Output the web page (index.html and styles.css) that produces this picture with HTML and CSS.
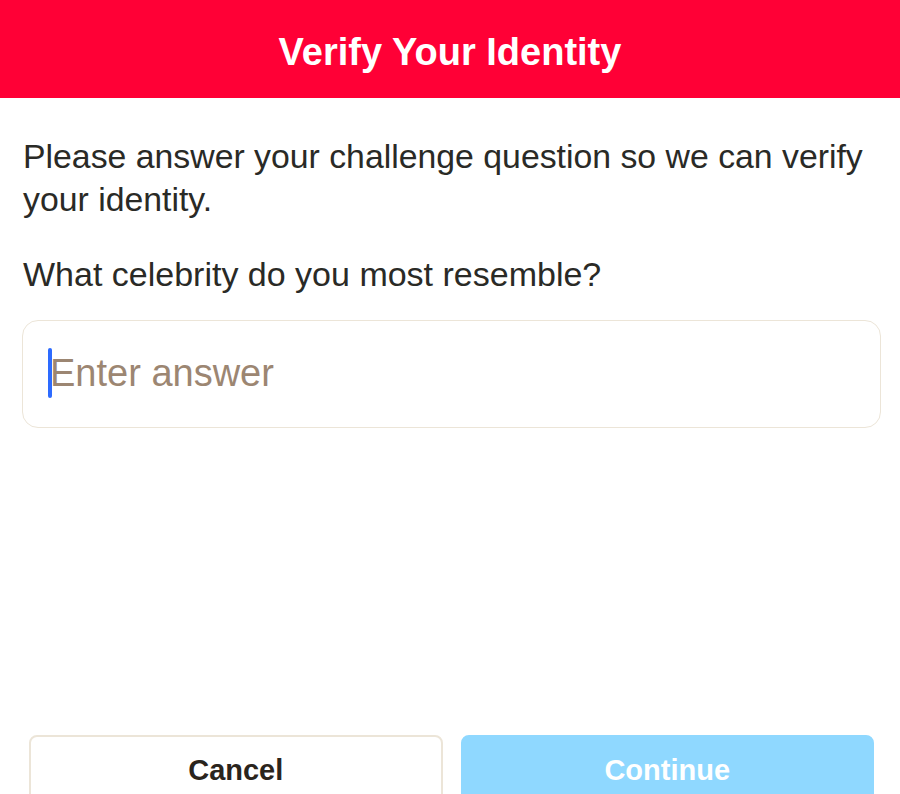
FILE: index.html
```html
<!DOCTYPE html>
<html lang="en">
<head>
  <meta charset="UTF-8">
  <title>Verify Your Identity</title>
  <link rel="stylesheet" href="styles.css">
</head>
<body>
  <header class="topbar">
    <h1>Verify Your Identity</h1>
  </header>

  <main class="content">
    <p class="intro">Please answer your challenge question so we can verify your identity.</p>
    <p class="question">What celebrity do you most resemble?</p>
    <div class="answer-box">
      <span class="caret"></span>
      <span class="placeholder">Enter answer</span>
    </div>
  </main>

  <div class="actions">
    <button class="btn cancel">Cancel</button>
    <button class="btn continue">Continue</button>
  </div>
</body>
</html>
```

FILE: styles.css
```css
body {
  margin: 0;
  font-family: "Liberation Sans", Arial, sans-serif;
  color: #2a2a26;
  background: #fff;
  height: 794px;
  overflow: hidden;
  display: flex;
  flex-direction: column;
}
.topbar {
  background: #ff0036;
  height: 98px;
  box-sizing: border-box;
  padding-top: 6px;
  display: flex;
  align-items: center;
  justify-content: center;
}
.topbar h1 {
  margin: 0;
  color: #fff;
  font-size: 38px;
  font-weight: bold;
}
.content {
  padding: 0 19px 0 22px;
  flex: 1;
}
.intro {
  margin: 37px 0 0 1px;
  font-size: 33.8px;
  line-height: 43px;
}
.question {
  margin: 32px 0 0 1px;
  font-size: 34px;
  line-height: 43px;
}
.answer-box {
  margin-top: 24px;
  height: 108px;
  box-sizing: border-box;
  border: 1px solid #ece5d8;
  border-radius: 16px;
  display: flex;
  align-items: center;
  padding-left: 25px;
  padding-bottom: 2px;
}
.caret {
  width: 4px;
  height: 50px;
  border-radius: 2px;
  background: #2d6bff;
}
.placeholder {
  font-size: 38px;
  color: #9c8672;
  margin-left: -2px;
}
.actions {
  display: flex;
  gap: 18px;
  padding: 0 26px 0 29px;
  height: 59px;
  align-items: flex-start;
}
.btn {
  flex: 1;
  height: 90px;
  border-radius: 8px;
  font-family: "Liberation Sans", Arial, sans-serif;
  font-size: 29px;
  font-weight: bold;
  padding: 0 0 20px;
}
.cancel {
  background: #fff;
  border: 2px solid #ece5d8;
  color: #2a241c;
}
.continue {
  background: #8fd8ff;
  border: 2px solid #8fd8ff;
  color: #fff;
}
```
